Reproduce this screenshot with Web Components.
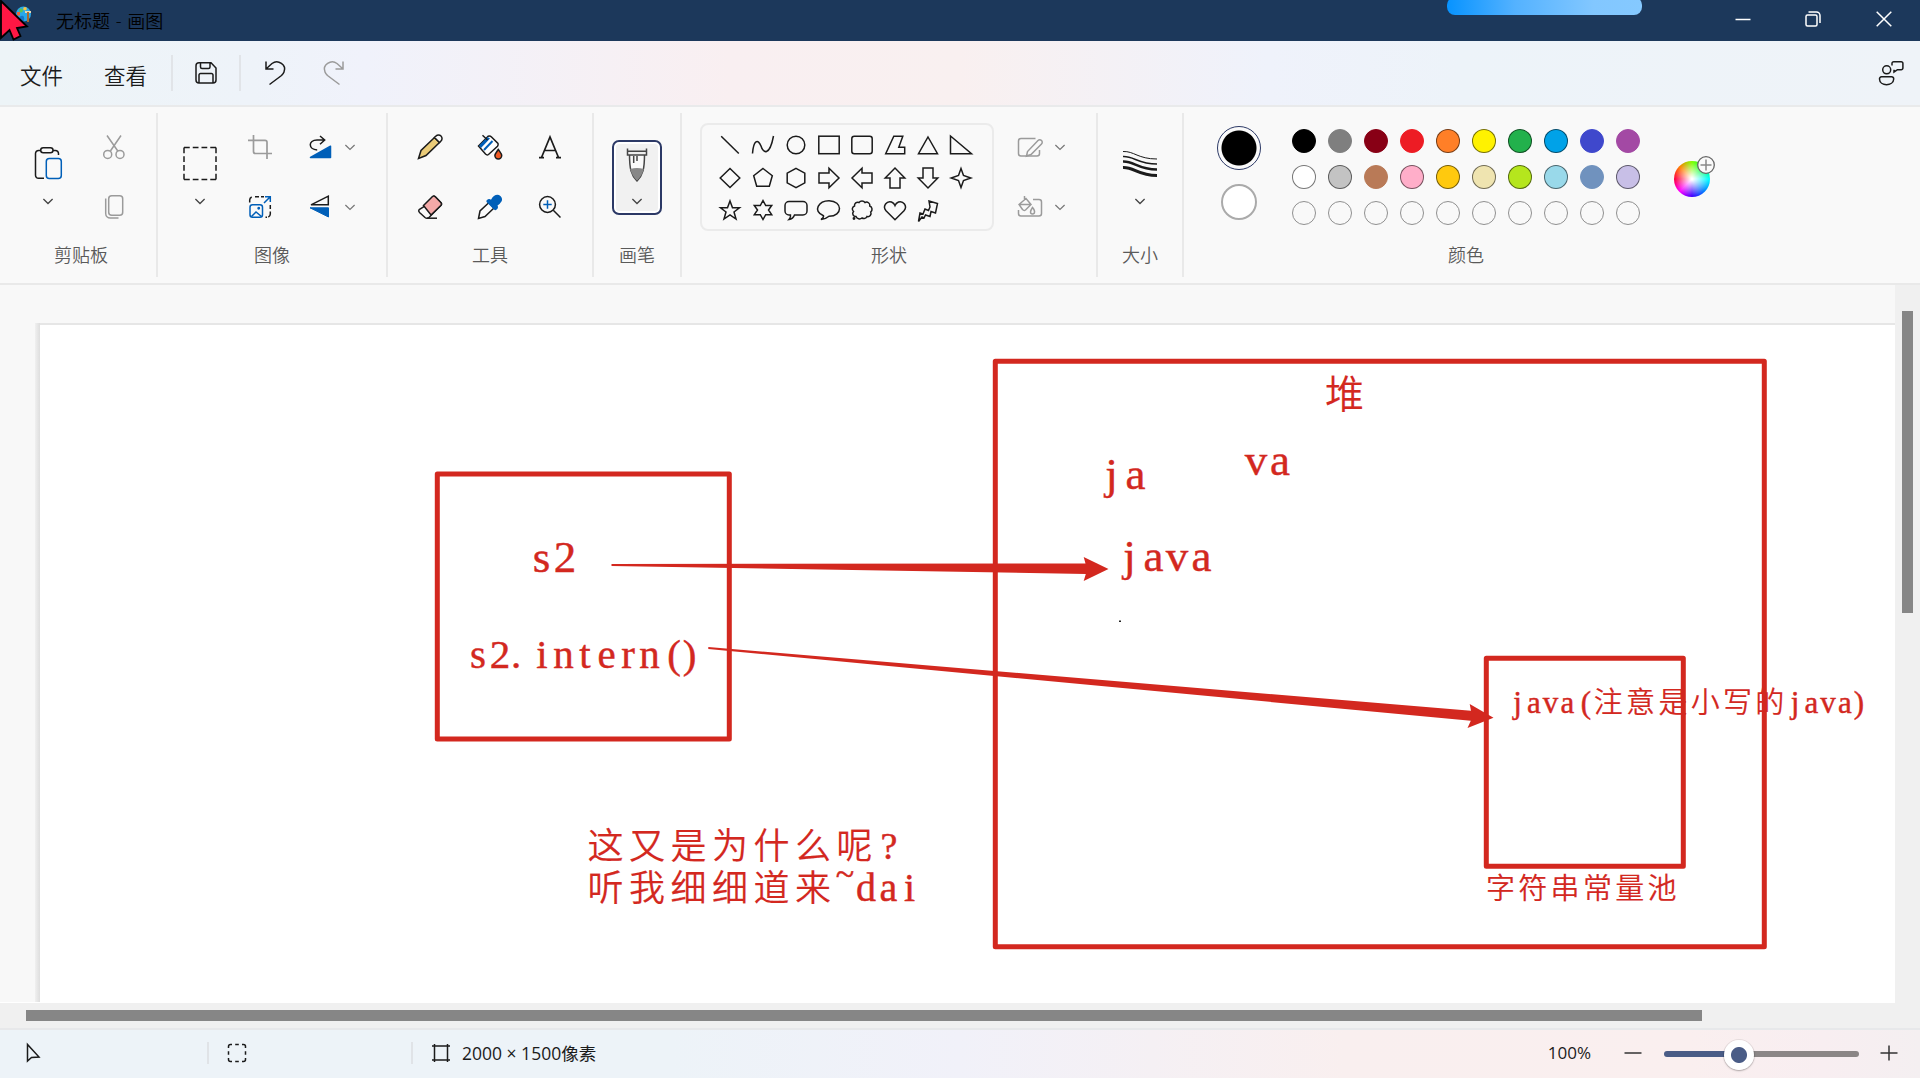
<!DOCTYPE html>
<html lang="zh-CN">
<head>
<meta charset="utf-8">
<title>无标题 - 画图</title>
<style>
html,body{margin:0;height:100%;overflow:hidden}
body{font-family:"Open Sans","Noto Sans CJK SC",sans-serif;color:#1b1b1b}
</style>
</head>
<body>
<paint-app></paint-app>
<script>
const K='#1b1b1b', B='#005fb8', G='#9b9b9b';
const poly=p=>`<polygon points="${p}"/>`;
const ICONS={
chev:`<path d="M-4.6 -2L0 2.5L4.6 -2" stroke="#444" stroke-width="1.3"/>`,
chevlight:`<path d="M-4.6 -2L0 2.5L4.6 -2" stroke="#777" stroke-width="1.2"/>`,
paste:`<path d="M-4 15.3H-9.5a3 3 0 0 1-3-3V-9.5a3 3 0 0 1 3-3h2M5-12.5h2.5a3 3 0 0 1 3 3v1.5"/><rect x="-7.3" y="-15.2" width="12.3" height="5" rx="2.5"/><rect x="-1.7" y="-4.5" width="15" height="20" rx="3" stroke="${B}"/>`,
cut:`<g stroke="${G}"><path d="M-7-11.5L3.8 4M7-11.5L-3.6 4"/><circle cx="-6.3" cy="7.4" r="4"/><circle cx="6" cy="7.4" r="4"/></g>`,
copy:`<g stroke="${G}"><rect x="-5.3" y="-11.3" width="14" height="19.6" rx="3"/><path d="M-8.3-8.5V6.5a4.5 4.5 0 0 0 4.5 4.5H4.5"/></g>`,
select:`<path stroke-dasharray="5.75 3" d="M-16-15.500H16M16-15.500V16.500M-16 16.500H16M-16-15.500V16.500"/>`,
crop:`<g stroke="${G}" stroke-width="1.7"><path d="M-6.5-12V4.500a2 2 0 0 0 2 2H12M-12-6.700H5a2 2 0 0 1 2 2V12"/></g>`,
resize:`<path d="M-10.300-4.500V-6.500a3.500 3.500 0 0 1 2-3.500M-5-10.300h4M1-10.300h3M10.300-2v4M10.300 4.500V7a3.300 3.300 0 0 1-2 3M5.500 10.300h1.500"/><g stroke="${B}"><rect x="-10" y="-2.300" width="12.500" height="12.500" rx="2.500"/><path d="M-8.500 9.500L-4 5L1.500 9.500M4-4L10-10M5-10.300h5.300v5.300"/><circle cx="-1.300" cy="1.200" r=".7" fill="${B}"/></g>`,
rotate:`<path d="M-2.800 3C-12 2.500-12-7-3-7H4.500M0-11L4.700-7L0-2.800"/><path fill="${B}" stroke="${B}" stroke-linejoin="round" d="M-9.500 10.500L10.500-.8V10.500Z"/>`,
flip:`<path d="M-9-2.200L8.300-10.800V-2.200Z"/><path fill="${B}" stroke="${B}" stroke-width="1" d="M-10 .8H8.500V10Z"/>`,
pencil:`<path fill="#eacb78" d="M-11.500 11.500L-9 3.500L4.500-9.500L9.500-4.500L-4 8.500Z"/><path fill="#fafafa" d="M4.500-9.500L6-11a3.500 3.500 0 0 1 5 5L9.500-4.500Z"/>`,
bucket:`<path fill="#fff" d="M-11.500-1L-2-10.700Q0-11.500 1.500-10L8-3.500Q8.500-2 7.500-.8L-1.500 7.500Q-3 8.500-4.500 7Z"/><path fill="${B}" stroke="none" d="M-11-1.500L-2.500-10L0-8.500L-9 1Z"/><path stroke="${B}" stroke-width="2" d="M-6 3L2.500-6"/><path d="M-7.500-11.800L-2.500-7"/><path fill="#f15a24" d="M8.300 2.500C10 5 11.700 6.800 11.700 8.500a3.400 3.400 0 0 1-6.800 0C4.900 6.800 6.700 5 8.300 2.500Z"/>`,
texttool:`<path stroke-width="1.700" d="M-8.500 10.500L0-10L8.500 10.500M-5.300 3.500H5.300M-11 10.700H-6M6 10.700H11"/>`,
eraser:`<path fill="#fafafa" d="M-6.500 0L2.500-10Q4-11.500 5.500-10L10.800-4.500Q12.200-3 10.800-1.500L-1 10.500Q-3 12-5 10.500L-10.500 5.500Q-12 4-10.800 2.500Z"/><path fill="#f4a9a8" d="M-6.500-1.500L2.500-10.500Q4-11.500 5.500-10L10.800-4.500Q12.200-3 10.800-1.500L1 8Z"/><path d="M-3 11.200H7"/>`,
dropper:`<path fill="#fafafa" d="M-11.500 11.500L-10 4L-1-4.500L4 1L-5 9.500Z"/><path fill="${B}" stroke="none" d="M-3.500-6.500Q-1-9 1-7.300Q4-13 9-12Q13-9.500 11.800-6Q10-3 7.500-1.500Q9 1 6 3Q5 3.500 4 2.500L-3-4.500Q-4-5.500-3.500-6.500Z"/>`,
zoomtool:`<circle cx="-2.500" cy="-2.500" r="7.900"/><path d="M3.300 3.300L10.500 10.500"/><path stroke="${B}" d="M-2.500-6.700V1.700M-6.700-2.500H1.700"/>`,
brush:`<g stroke="#454545"><path fill="#fafafa" d="M-7.500-11C-7.500 4-6 10 0 16C6 10 7.500 4 7.500-11"/><path fill="#888" stroke="none" d="M-6.800 4Q0 2 6.800 4Q5 11 0 15.500Q-5 11-6.800 4Z"/><path fill="#eee" d="M-9.500-16.500V-10H9.500V-16.500M-9.500-13.800H9.500"/><path d="M-3.300-9V-2M0-9V-4"/></g>`,
line:`<path d="M-8.800-8.800L8.800 8.500"/>`,
curve:`<path d="M-10.500 8.500C-9.500-5-5-6.500-2 1C0 8 6.500 12 10.500-9"/>`,
circle:`<circle r="8.800"/>`,
rect:`<rect x="-10.200" y="-8.800" width="20.400" height="17.500"/>`,
rrect:`<rect x="-10.200" y="-8.800" width="20.400" height="17.500" rx="2.500"/>`,
polyg:poly('-1.200,-8.800 7.800,-8.800 3.800,2.300 9.700,2.300 9.700,8.800 -9.300,8.800'),
tri:poly('0,-8 9.500,8.700 -9.500,8.700'),
rtri:poly('-10.500,-9 10.500,8.700 -10.500,8.700'),
diamond:poly('0,-9.500 9.800,0 0,9.500 -9.800,0'),
penta:poly('0,-9.500 9.300,-2.300 6.300,8.300 -6.300,8.300 -9.300,-2.300'),
hexa:poly('0,-9.600 8.800,-4.800 8.800,4.800 0,9.600 -8.800,4.800 -8.800,-4.800'),
right:poly('-10,-5 0,-5 0,-9.800 10,0 0,9.800 0,5 -10,5'),
left:poly('10,-5 0,-5 0,-9.800 -10,0 0,9.800 0,5 10,5'),
up:poly('-5,10 -5,0 -9.800,0 0,-10 9.800,0 5,0 5,10'),
down:poly('-5,-10 -5,0 -9.800,0 0,10 9.800,0 5,0 5,-10'),
star4:poly('0,-9.500 2.500,-2.500 9.800,0 2.500,2.500 0,9.500 -2.500,2.500 -9.800,0 -2.500,-2.500'),
star5:poly('0,-9 2.500,-2.200 9.500,-2.200 4,2 6,9 0,5 -6,9 -4,2 -9.500,-2.200 -2.500,-2.200'),
star6:poly('0,-9.500 2.700,-4.500 8.700,-4.500 5.500,0 8.700,4.700 2.700,4.700 0,9.500 -2.700,4.700 -8.700,4.700 -5.500,0 -8.700,-4.500 -2.700,-4.500'),
bubble:`<path d="M-7-8.500H7a4 4 0 0 1 4 4V1a4 4 0 0 1-4 4H-1.500Q-3 9-7 9.500Q-5 7.500-5.500 5H-7a4 4 0 0 1-4-4V-4.500a4 4 0 0 1 4-4Z"/>`,
oval:`<path d="M-5.500 5.800C-17 1-10-9.300 0-9.300C14-9 14 6.300 0 6.300Q-3 9-8 9.500Q-5 7.500-5.500 5.800Z"/>`,
cloud:`<path d="M-6 6.500a3 3 0 0 1-2.500-5a3.200 3.200 0 0 1 1-5.500a3.300 3.300 0 0 1 4.500-3.500a3.800 3.800 0 0 1 6 0a3.300 3.300 0 0 1 4.800 3.500a3.500 3.500 0 0 1 .9 6a3.200 3.200 0 0 1-3.700 4.500a3.500 3.500 0 0 1-5 1.500a3.800 3.800 0 0 1-6-1.500Z"/><circle cx="-8" cy="8.500" r=".7"/>`,
heart:`<path d="M0 9.800L-9 .8C-13-4-8-9.500-3.500-8Q-1-7 0-4.500Q1-7 3.500-8C8-9.500 13-4 9 .8Z"/>`,
bolt:poly('1,-9 9.500,-6.500 7.500,3 3,1.500 2,6.500 -2.500,5 -4,8 -6,7 -9.500,11.500 -8,3 -5,4 -3,-1 .5,.5 2,-3'),
outline:`<g stroke="${G}"><path d="M5.500-8.500H-9a2.500 2.500 0 0 0-2.500 2.500V6.500A2.500 2.500 0 0 0-9 9H7a2.500 2.500 0 0 0 2.500-2.500V3"/><path fill="#fafafa" d="M-3.500 9L-2.500 4.500L8-6.500a2.300 2.300 0 0 1 3.500 3.500L1 7.500Z"/></g>`,
fill:`<g stroke="${G}"><path d="M3-7.500H9a2.500 2.500 0 0 1 2.500 2.500V6.500A2.500 2.500 0 0 1 9 9H-9a2.500 2.500 0 0 1-2.500-2.500V3"/><path d="M-11-2.500L-4-8.500L1-2.500L-4.500 3Q-6 4-7.500 2.500ZM-10-2.500H1M-5.500-11V-6"/><path d="M2.500 .5Q5 3.500 4.500 5a2 2 0 0 1-4 0Q.5 3.500 2.500 .5Z"/></g>`,
sizes:`<path stroke-width="1" d="M-17-11.500C-6-12-2-4 17-4"/><path stroke-width="1.600" d="M-17-6.500C-6-7-2 1 17 1"/><path stroke-width="2.300" d="M-17-1.500C-6-2-2 6.500 17 6.500"/><path stroke-width="3.200" d="M-17 4.500C-6 4-2 12.500 17 12.500"/>`,
save:`<path d="M-7-10.300H5L10-5V7a3 3 0 0 1-3 3H-7a3 3 0 0 1-3-3V-7.300a3 3 0 0 1 3-3ZM-5.500-10V-6a1.500 1.500 0 0 0 1.500 1.500H2.500A1.500 1.500 0 0 0 4-6V-10M-7 10V2a1.500 1.500 0 0 1 1.500-1.500H5.500A1.500 1.500 0 0 1 7 2V10"/>`,
undo:`<path d="M-9-11.500V-4H-1.500M-8.500-4.500L-3-9.500C3-14 12-8 9-1Q8.500 .5 6.500 2.500L-5.500 11.500"/>`,
redo:`<path stroke="${G}" d="M9-11.500V-4H1.500M8.500-4.500L3-9.500C-3-14-12-8-9-1Q-8.500 .5-6.500 2.500L5.500 11.500"/>`,
feedback:`<circle cx="-4.300" cy="-3.200" r="4"/><path d="M-9.500 3.800H.5A2 2 0 0 1 2.700 6C2.500 13.500-11.500 13.500-11.500 6A2 2 0 0 1-9.500 3.800ZM1-7.500V-9.500A1.700 1.700 0 0 1 2.700-11.300H10.200A1.700 1.700 0 0 1 11.900-9.500V-5A1.700 1.700 0 0 1 10.200-3.300H6.500L3-1V-3.300"/>`,
min:`<path stroke="#fff" d="M-7.500 .5H7.500"/>`,
restore:`<g stroke="#fff"><rect x="-7" y="-4" width="11" height="11" rx="1.500"/><path d="M-4.500-7H3.500a3.500 3.500 0 0 1 3.500 3.500V4"/></g>`,
close:`<path stroke="#fff" d="M-7.300-7.300L7.300 7.300M7.300-7.300L-7.300 7.300"/>`,
pointer:`<path d="M-5.500-8.500V8L-1.500 4.500L6 4Z"/>`,
selsize:`<path d="M-8.500-5V-6.500a2 2 0 0 1 2-2H-5M5-8.500H6.500a2 2 0 0 1 2 2V-5M8.500 5V6.500a2 2 0 0 1-2 2H5M-5 8.500H-6.500a2 2 0 0 1-2-2V5M-1.800-8.500H1.800M-1.800 8.500H1.800M-8.500-1.800V1.800M8.500-1.800V1.800"/>`,
imgsize:`<path d="M-6.500-9V9M6.500-9V9M-9-7H9M-9 7H9"/>`,
minus:`<path stroke="#333" d="M-8.500 0H8.500"/>`,
plus:`<path stroke="#333" d="M-8.500 0H8.500M0-7.500V7.500"/>`
};

const define=(name,css,html)=>customElements.define(name,class extends HTMLElement{
  constructor(){super();this.attachShadow({mode:'open'})}
  connectedCallback(){this.shadowRoot.innerHTML=`<style>${css}</style>`+(typeof html==='function'?html(this):html)}
});

define('paint-icon',`:host{display:flex;align-items:center;justify-content:center;flex:none}svg{display:block;overflow:visible}`,
 el=>`<svg width="36" height="36" viewBox="-18 -18 36 36" fill="none" stroke="${K}" stroke-width="1.500">${ICONS[el.getAttribute('name')]}</svg>`);

define('paint-logo',`:host{display:block;width:16px;height:17px}svg{display:block}`,
`<svg width="16" height="17" viewBox="0 0 16 17"><ellipse cx="7.500" cy="8" rx="7.500" ry="7.500" fill="#28a8ea"/><path d="M5 15.500Q2 11 5 10Q9 9 8 15Z" fill="#1577c8"/><circle cx="5" cy="4.500" r="2" fill="#56c35b"/><circle cx="9" cy="2.800" r="1.800" fill="#f9c642"/><rect x="1" y="6" width="3" height="3.500" fill="#e8643c"/><path d="M9 5h6v2h-6z" fill="#ead7b0"/><path d="M12 6v10" stroke="#a66a31" stroke-width="2"/></svg>`);

define('title-bar',`:host{display:flex;height:41px;background:#1c385b;color:#000;align-items:flex-start}
paint-logo{margin:6px 0 0 16px}
.t{flex:1;font-size:18px;font-weight:350;line-height:24px;margin:9px 0 0 24px;white-space:pre;word-spacing:1px}
.w{display:flex;padding-top:1px}.w paint-icon{width:70px;height:36px}
.pill{position:absolute;left:1447px;top:-3px;width:195px;height:18px;border-radius:8px;background:linear-gradient(90deg,#0793ff,#54b2ff 35%,#82c7ff 75%,#85c9ff)}
.cur{position:absolute;left:0;top:0}`,
`<paint-logo></paint-logo><span class="t">无标题 - 画图</span><div class="w"><paint-icon name="min"></paint-icon><paint-icon name="restore"></paint-icon><paint-icon name="close" style="width:72px"></paint-icon></div><div class="pill"></div>
<svg class="cur" width="30" height="42"><path d="M1 1L27 26.500L17 28L20.500 36L13.500 39.500L9.500 30L1 38Z" fill="#ff1744" stroke="#000" stroke-width="1.800"/></svg>`);

define('menu-bar',`:host{display:flex;box-sizing:border-box;height:66px;border-bottom:2px solid #e9eaeb;align-items:center;background:linear-gradient(90deg,#edf4f7 0,#eef3f9 13%,#f0f2fb 19%,#f9eff1 38%,#f9f0f0 50%,#eff2fb 66%,#edf3f9 76%,#eff3f8);font-size:21.500px;font-weight:350}
span{margin-top:2px}i{width:2px;height:36px;background:#e1e4e8}
paint-icon{height:60px;margin-top:-1px}`,
`<span style="margin-left:20px;width:43px">文件</span><span style="margin-left:41px;width:43px">查看</span><i style="margin-left:24px"></i><paint-icon name="save" style="width:66px"></paint-icon><i></i><paint-icon name="undo" style="width:68px"></paint-icon><paint-icon name="redo" style="width:49px"></paint-icon><paint-icon name="feedback" style="width:58px;margin-left:auto"></paint-icon>`);

define('ribbon-group',`:host{display:flex;flex-direction:column;box-sizing:border-box;height:164px;margin-top:6px;flex:none}
:host(:not([last])){border-right:2px solid #e9e9e9}
.c{display:flex;height:124px;padding-top:4px;box-sizing:border-box}.l{text-align:center;font-size:18px;font-weight:350;line-height:26px;margin-top:5px;color:#5a5a5a}`,
 el=>`<div class="c"><slot></slot></div><div class="l" style="padding-left:${el.getAttribute('shift')||0}px">${el.getAttribute('label')}</div>`);

define('big-tool',`:host{display:flex;flex-direction:column;align-items:center;width:60px}paint-icon{height:36px}.a{margin-top:28px}.b{margin-top:2px}`,
 el=>`<paint-icon class="a" name="${el.getAttribute('icon')}"></paint-icon><paint-icon class="b" name="chev"></paint-icon>`);

define('tool-grid',`:host{display:grid;grid-auto-rows:60px}`,
 el=>{el.style.gridTemplateColumns=el.getAttribute('cols');return el.getAttribute('icons').split(' ').map(n=>`<paint-icon name="${n}"></paint-icon>`).join('')});

define('brush-button',`:host{display:flex;flex-direction:column;box-sizing:border-box;width:50px;height:75px;border:2px solid #2c3966;border-radius:7px;background:#f1f1f1;box-shadow:inset 0 0 0 2px #fff;align-items:center;margin:23px 0 0 18px}
.a{height:46px}.line{width:42px;height:2px;background:#bdbdbd}.b{height:25px}`,
`<paint-icon class="a" name="brush"></paint-icon><div class="line"></div><paint-icon class="b" name="chev"></paint-icon>`);

define('shape-gallery',`:host{display:grid;box-sizing:border-box;width:294px;height:108px;margin:6px 0 0 18px;border:2px solid #ebebeb;border-radius:8px;grid-template-columns:repeat(8,33px);grid-auto-rows:32.500px;padding:4px 0 0 11.500px}`,
 'line curve circle rect rrect polyg tri rtri diamond penta hexa right left up down star4 star5 star6 bubble oval cloud heart bolt'.split(' ').map(n=>`<paint-icon name="${n}"></paint-icon>`).join(''));

const COL='#000000 #7f7f7f #880015 #ed1c24 #ff7f27 #fff200 #22b14c #00a2e8 #3f48cc #a349a4 #ffffff #c3c3c3 #b97a57 #ffaec9 #ffc90e #efe4b0 #b5e61d #99d9ea #7092be #c8bfe7'.split(' ');
const RIM=[4,5,6,7,10,11,13,14,15,16,17,19];
define('color-palette',`:host{display:flex;width:100%}
.pair{display:flex;flex-direction:column;align-items:center;width:44px;margin:9px 0 0 32.500px;gap:14px}
.p{width:44px;height:44px;box-sizing:border-box;border:1.500px solid #2c3966;border-radius:50%;background:radial-gradient(circle,#000 0 17px,#fafafa 18px)}
.s{width:36px;height:36px;box-sizing:border-box;border:2px solid #aaa;border-radius:50%;background:#fff}
.g{display:grid;grid-template-columns:repeat(10,36px);grid-auto-rows:36px;margin:6px 0 0 25.500px;place-items:center}
.g b{width:24px;height:24px;border-radius:50%;box-sizing:border-box;border:1.500px solid transparent}
.wh{width:36px;height:36px;border-radius:50%;margin:44px 0 0 28px;background:radial-gradient(circle closest-side,#fff 5%,#fffa 35%,#fff0 95%),conic-gradient(#80ff00,#00ff40,#00ffff,#0080ff,#4000ff,#ff00ff,#ff0040,#ff8000,#80ff00);position:relative}
.wh svg{position:absolute;left:22px;top:-6px}`,
`<div class="pair"><div class="p"></div><div class="s"></div></div><div class="g">`+Array.from({length:30},(_,i)=>`<b style="${i<20?`background:${COL[i]};border-color:${RIM.includes(i)?'#0008':COL[i]}`:'border-color:#909090'}"></b>`).join('')+`</div><div class="wh"><svg width="20" height="20" viewBox="-10 -10 20 20"><circle r="8.300" fill="#fafafa" stroke="#666" stroke-width="1.300"/><path d="M-5.500 0H5.500M0-5.500V5.500" stroke="#888" stroke-width="1.500"/></svg></div>`);

define('ribbon-bar',`:host{display:flex;box-sizing:border-box;height:178px;background:#f9f9f9;border-bottom:2px solid #e9e9e9}`,
`<ribbon-group label="剪贴板" shift="6" style="width:158px"><big-tool icon="paste" style="margin-left:18px"></big-tool><tool-grid cols="72px" icons="cut copy"></tool-grid></ribbon-group>
<ribbon-group label="图像" style="width:230px"><big-tool icon="select" style="margin-left:12px"></big-tool><tool-grid cols="60px 60px 0" icons="crop rotate chevlight resize flip chevlight"></tool-grid></ribbon-group>
<ribbon-group label="工具" style="width:206px"><tool-grid cols="60px 60px 60px" style="margin-left:12px" icons="pencil bucket texttool eraser dropper zoomtool"></tool-grid></ribbon-group>
<ribbon-group label="画笔" style="width:88px"><brush-button></brush-button></ribbon-group>
<ribbon-group label="形状" style="width:416px"><shape-gallery></shape-gallery><tool-grid cols="60px 0" style="margin-left:6px" icons="outline chevlight fill chevlight"></tool-grid></ribbon-group>
<ribbon-group label="大小" style="width:86px"><big-tool icon="sizes" style="margin-left:12px"></big-tool></ribbon-group>
<ribbon-group label="颜色" last style="width:564px"><color-palette></color-palette></ribbon-group>`);

const lat=(s,xs,y,f)=>`<tspan font-size="${f}" x="${xs}" y="${y}">${s}</tspan>`;
const seq=(a,p,n)=>Array.from({length:n},(_,i)=>(a+p*i).toFixed(1)).join(' ');
const cjk=(s,a,p,y,f)=>`<tspan class="c" font-size="${f}" x="${seq(a,p,s.length)}" y="${y}">${s}</tspan>`;
define('paint-canvas',`:host{display:block;flex:1;height:100%;overflow:hidden}svg{display:block}
text{font-family:"Liberation Serif","Noto Sans CJK SC",serif;fill:#d3281f;stroke:#d3281f;stroke-width:.45px;text-anchor:middle}
.c{font-family:"Liberation Serif","Noto Sans CJK SC",serif;font-weight:350;stroke-width:.15px}`,
`<svg width="1895" height="718" viewBox="0 285 1895 718">
<defs><linearGradient id="edge"><stop stop-color="#f0f0f0"/><stop offset="1" stop-color="#dedede"/></linearGradient></defs>
<rect y="285" width="1895" height="718" fill="#f8f8f8"/><rect x="36" y="323" width="1859" height="2" fill="#e6e6e6"/><rect x="35" y="323" width="5" height="679" fill="url(#edge)"/><rect x="40" y="325" width="1855" height="678" fill="#fff"/><rect y="1002" width="41" height="1" fill="#fff"/>
<g fill="none" stroke="#d3281f" stroke-width="5" stroke-linejoin="round"><rect x="437.300" y="474" width="292" height="265"/><rect x="995.300" y="361.300" width="769" height="585.500"/><rect x="1486.300" y="658.200" width="197" height="208"/></g>
<g fill="#d3281f"><path d="M611.500 564L1085.500 563.500L1083.700 557L1108.500 569L1083.700 581L1085.800 574L611.500 566Z"/><path d="M708.300 647L1471 710.800L1469.700 704L1493.500 717.700L1467.500 728L1470.800 720.800L708.300 649Z"/></g>
<rect x="1119" y="620.500" width="2" height="1.500" fill="#222"/>
<text>${cjk('堆',1344.500,0,408,39)}</text>
<text>${lat('ja','1111.500 1135.500',489,45)}</text>
<text>${lat('va','1256 1280',474.500,45)}</text>
<text>${lat('java','1129.500 1153.500 1177 1201.500',570.500,45)}</text>
<text>${lat('s2','541.500 565',571.500,45)}</text>
<text>${lat('s2.intern()','478 500 516 542 563.500 585 606.500 628 649.500 674 689.500',668,41)}</text>
<text>${lat('java(','1517.500 1534 1550.500 1567.500 1586',713,31)}${cjk('注意是小写的',1608.300,32.300,712.500,29)}${lat('java)','1795 1811.500 1828 1845 1859',713,31)}</text>
<text>${cjk('字符串常量池',1500.500,32.300,898.500,29)}</text>
<text>${cjk('这又是为什么呢',605.500,41.500,859,36)}${lat('?','889',859,38)}</text>
<text>${cjk('听我细细道来',605.500,41.500,900.500,36)}${lat('~','845',885,34)}${lat('dai','866 888.500 909.500',901,40)}</text>
</svg>`);

define('work-area',`:host{display:flex;flex-direction:column;height:743px;background:#f0f0f0}
.row{display:flex;height:718px}.v{width:25px}.v div{width:11px;height:302px;margin:26px 0 0 7px;background:#868686}
.h{width:1676px;height:11px;margin:7px 0 0 26px;background:#868686}`,
`<div class="row"><paint-canvas></paint-canvas><div class="v"><div></div></div></div><div class="h"></div>`);

define('zoom-slider',`:host{display:block;width:195px;height:6px;border-radius:3px;background:linear-gradient(90deg,#4a5c86 75px,#8b8686 75px);position:relative;margin-top:-1px}
div{position:absolute;left:60px;top:-11px;width:30px;height:30px;border-radius:50%;background:radial-gradient(circle,#4a5c86 7.500px,#fff 8.500px);box-shadow:0 0 0 1px #0001,0 1px 2px #0004}`,`<div></div>`);

define('status-bar',`:host{display:flex;box-sizing:border-box;height:50px;border-top:2px solid #e7e8ea;align-items:center;background:linear-gradient(90deg,#edf3f8 0,#edf3f8 35%,#f1f1f9 50%,#f9efef 70%,#faefef 88%,#f8eef1 95%,#f4eff1);font-size:17.500px}
i{width:2px;height:22px;background:#e0e3e7;margin-top:-3px}.s{width:56px}paint-icon{margin-top:-2px}.t{margin-top:-3px;font-weight:400;white-space:pre}`,
`<paint-icon name="pointer" style="width:36px;margin-left:15px"></paint-icon><i style="margin-left:156px"></i><paint-icon name="selsize" class="s"></paint-icon><i style="margin-left:146px"></i><paint-icon name="imgsize" class="s"></paint-icon><span class="t" style="margin-left:-7px;width:140px">2000 × 1500像素</span>
<span class="t" style="margin-left:auto;font-size:17px">100%</span><paint-icon name="minus" style="width:36px;margin-left:24px"></paint-icon><zoom-slider style="margin-left:13px"></zoom-slider><paint-icon name="plus" style="width:36px;margin:-2px 13px 0 12px"></paint-icon>`);

define('paint-app',`:host{display:flex;flex-direction:column;width:1920px;height:1078px;overflow:hidden}`,
`<title-bar></title-bar><menu-bar></menu-bar><ribbon-bar></ribbon-bar><work-area></work-area><status-bar></status-bar>`);
</script>
</body>
</html>
